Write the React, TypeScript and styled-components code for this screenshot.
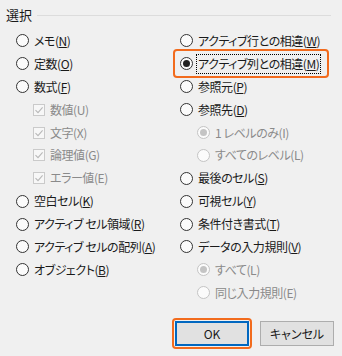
import React from "react";
import styled, { createGlobalStyle, css } from "styled-components";

type Option = {
  label: string;
  key: string;
  kind: "radio" | "check";
  indent?: boolean;
  disabled?: boolean;
  checked?: boolean;
  focused?: boolean;
};

const leftOptions: Option[] = [
  { label: "メモ", key: "N", kind: "radio" },
  { label: "定数", key: "O", kind: "radio" },
  { label: "数式", key: "F", kind: "radio" },
  { label: "数値", key: "U", kind: "check", indent: true, disabled: true, checked: true },
  { label: "文字", key: "X", kind: "check", indent: true, disabled: true, checked: true },
  { label: "論理値", key: "G", kind: "check", indent: true, disabled: true, checked: true },
  { label: "エラー値", key: "E", kind: "check", indent: true, disabled: true, checked: true },
  { label: "空白セル", key: "K", kind: "radio" },
  { label: "アクティブ セル領域", key: "R", kind: "radio" },
  { label: "アクティブ セルの配列", key: "A", kind: "radio" },
  { label: "オブジェクト", key: "B", kind: "radio" },
];

const rightOptions: Option[] = [
  { label: "アクティブ行との相違", key: "W", kind: "radio" },
  { label: "アクティブ列との相違", key: "M", kind: "radio", checked: true, focused: true },
  { label: "参照元", key: "P", kind: "radio" },
  { label: "参照先", key: "D", kind: "radio" },
  { label: "1 レベルのみ", key: "I", kind: "radio", indent: true, disabled: true, checked: true },
  { label: "すべてのレベル", key: "L", kind: "radio", indent: true, disabled: true },
  { label: "最後のセル", key: "S", kind: "radio" },
  { label: "可視セル", key: "Y", kind: "radio" },
  { label: "条件付き書式", key: "T", kind: "radio" },
  { label: "データの入力規則", key: "V", kind: "radio" },
  { label: "すべて", key: "L", kind: "radio", indent: true, disabled: true, checked: true },
  { label: "同じ入力規則", key: "E", kind: "radio", indent: true, disabled: true },
];

const OptionRow: React.FC<{ option: Option }> = ({ option }) => {
  const { label, key, kind, indent, disabled, checked, focused } = option;
  return (
    <SRow $indent={!!indent} $disabled={!!disabled}>
      {focused && <SFocusRing />}
      {kind === "radio" ? (
        <SRadio $disabled={!!disabled}>{checked && <SDot $disabled={!!disabled} />}</SRadio>
      ) : (
        <SCheck>
          <svg width="10" height="10" viewBox="0 0 10 10">
            <path d="M1.5 5.2 L4 7.6 L8.6 2.4" fill="none" stroke="#b8b8b8" strokeWidth="1.1" />
          </svg>
        </SCheck>
      )}
      <SLabel $focused={!!focused}>
        {label}(
        {disabled ? key : <u>{key}</u>})
      </SLabel>
    </SRow>
  );
};

export default function App() {
  return (
    <>
      <GlobalStyle />
      <SDialog>
        <SGroupHeader>
          <STitle>選択</STitle>
          <SLine />
        </SGroupHeader>
        <SColumns>
          <SColumn>
            {leftOptions.map((o) => (
              <OptionRow key={o.label} option={o} />
            ))}
          </SColumn>
          <SColumn>
            {rightOptions.map((o) => (
              <OptionRow key={o.label} option={o} />
            ))}
          </SColumn>
        </SColumns>
        <SFooter>
          <SButton $primary>OK</SButton>
          <SButton>キャンセル</SButton>
        </SFooter>
      </SDialog>
    </>
  );
}

const GlobalStyle = createGlobalStyle`
  body {
    margin: 0;
    background: #f0f0f0;
    font-family: "Noto Sans CJK JP", "Noto Sans", sans-serif;
    font-feature-settings: "palt";
    color: #1a1a1a;
  }
`;

const SDialog = styled.div`
  width: 342px;
  height: 356px;
  box-sizing: border-box;
  padding: 6px 8px 0 6px;
`;

const SGroupHeader = styled.div`
  display: flex;
  align-items: center;
  gap: 5px;
  height: 18px;
  margin-right: 3px;
`;

const STitle = styled.span`
  font-size: 13px;
  line-height: 18px;
`;

const SLine = styled.div`
  flex: 1;
  height: 1px;
  background: #dcdcdc;
`;

const SColumns = styled.div`
  display: grid;
  grid-template-columns: 164px 1fr;
  margin-top: 5.5px;
  padding-left: 10px;
`;

const SColumn = styled.div`
  display: flex;
  flex-direction: column;
  align-items: flex-start;
`;

const SRow = styled.div<{ $indent: boolean; $disabled: boolean }>`
  position: relative;
  display: flex;
  align-items: center;
  gap: 5px;
  height: 22.9px;
  padding-left: ${(p) => (p.$indent ? "17px" : "0")};
  font-size: 12px;
  letter-spacing: -0.45px;
  color: ${(p) => (p.$disabled ? "#8a8a8a" : "#1a1a1a")};
  white-space: nowrap;
`;

const SFocusRing = styled.div`
  position: absolute;
  left: -7px;
  right: -8px;
  top: -3px;
  bottom: -3px;
  border: 2px solid #f26b1d;
  border-radius: 4px;
  pointer-events: none;
`;

const SRadio = styled.span<{ $disabled: boolean }>`
  flex: none;
  width: 13px;
  height: 13px;
  box-sizing: border-box;
  border-radius: 50%;
  border: 1px solid ${(p) => (p.$disabled ? "#c4c4c4" : "#333")};
  background: #fbfbfb;
  display: flex;
  align-items: center;
  justify-content: center;
`;

const SDot = styled.span<{ $disabled: boolean }>`
  width: 7px;
  height: 7px;
  border-radius: 50%;
  background: ${(p) => (p.$disabled ? "#c4c4c4" : "#222")};
`;

const SCheck = styled.span`
  flex: none;
  width: 12px;
  height: 12px;
  box-sizing: border-box;
  border: 1px solid #cacaca;
  background: #f7f7f7;
  display: flex;
  align-items: center;
  justify-content: center;
`;

const SLabel = styled.span<{ $focused: boolean }>`
  line-height: 18px;
  padding: 0 1px;
  border: 1px dotted transparent;
  margin-left: -2px;
  ${(p) =>
    p.$focused &&
    css`
      border-color: #000;
    `}
`;

const SFooter = styled.div`
  display: flex;
  justify-content: flex-end;
  gap: 11px;
  margin-top: 17px;
`;

const SButton = styled.button<{ $primary?: boolean }>`
  position: relative;
  width: 74px;
  height: 25px;
  box-sizing: border-box;
  font-family: inherit;
  font-feature-settings: "palt";
  font-size: 12px;
  color: #1a1a1a;
  background: #e1e1e1;
  border: 1px solid #adadad;
  padding: 0;
  ${(p) =>
    p.$primary &&
    css`
      border: 2px solid #0067c0;
      &::after {
        content: "";
        position: absolute;
        inset: -5px;
        border: 2px solid #f26b1d;
        border-radius: 4px;
      }
    `}
`;
